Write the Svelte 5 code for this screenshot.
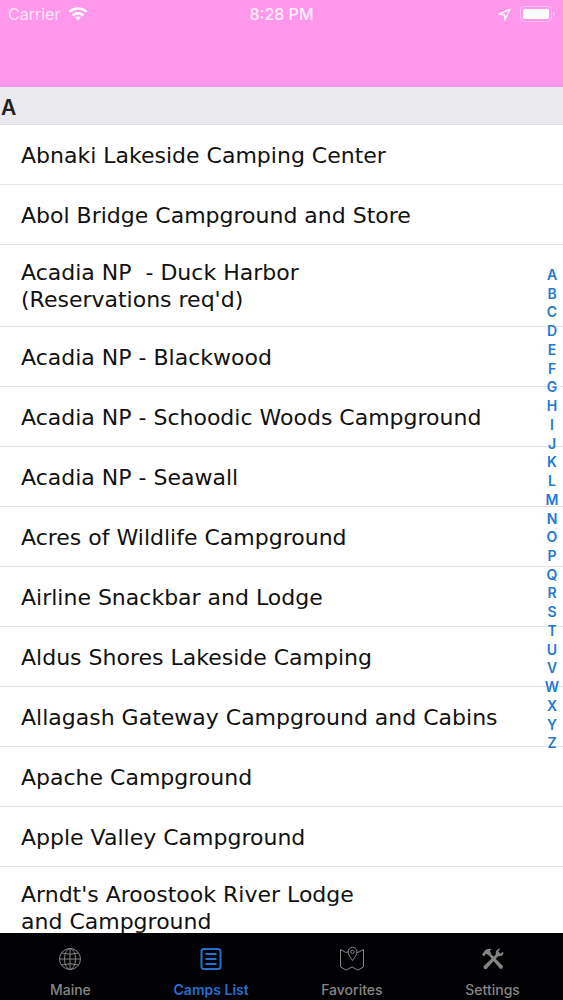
<script>
  const camps = [
    'Abnaki Lakeside Camping Center',
    'Abol Bridge Campground and Store',
    "Acadia NP  - Duck Harbor\n(Reservations req'd)",
    'Acadia NP - Blackwood',
    'Acadia NP - Schoodic Woods Campground',
    'Acadia NP - Seawall',
    'Acres of Wildlife Campground',
    'Airline Snackbar and Lodge',
    'Aldus Shores Lakeside Camping',
    'Allagash Gateway Campground and Cabins',
    'Apache Campground',
    'Apple Valley Campground',
    "Arndt's Aroostook River Lodge\nand Campground"
  ];
  const letters = 'ABCDEFGHIJKLMNOPQRSTUVWXYZ'.split('');
  const tabs = [
    { id: 'maine', label: 'Maine' },
    { id: 'camps', label: 'Camps List' },
    { id: 'favorites', label: 'Favorites' },
    { id: 'settings', label: 'Settings' }
  ];

  let active = $state('camps');
</script>

<div class="app">
  <header>
    <div class="status">
      <div class="carrier">
        <span>Carrier</span>
        <svg width="20" height="14" viewBox="0 0 20 14" fill="none" stroke="#fff" stroke-width="2.6" aria-hidden="true">
          <path d="M1.3 4.9 C6.3 0.3 13.7 0.3 18.7 4.9" />
          <path d="M4.7 8.5 C7.8 5.7 12.2 5.7 15.3 8.5" />
          <path d="M10 13.6 L7 10.6 C8.7 9.1 11.3 9.1 13 10.6 Z" fill="#fff" stroke="none" />
        </svg>
      </div>
      <time>8:28 PM</time>
      <div class="power">
        <svg width="13" height="13" viewBox="0 0 13 13" fill="none" stroke="#fff" stroke-width="1.3" stroke-linejoin="round" aria-hidden="true">
          <path d="M12 1 L1 6.4 L6.4 6.8 L6.8 12 Z" />
        </svg>
        <svg width="36" height="16" viewBox="0 0 36 16" aria-hidden="true">
          <rect x="1.5" y="0.5" width="31" height="15" rx="3.5" fill="none" stroke="#fff" stroke-opacity="0.4" />
          <rect x="4" y="3" width="26" height="10" rx="1.5" fill="#fff" />
          <path d="M34 5.5 C36 6.3 36 9.7 34 10.5 Z" fill="#fff" fill-opacity="0.5" />
        </svg>
      </div>
    </div>
  </header>

  <main>
    <h2>A</h2>
    <ul>
      {#each camps as camp}
        <li><a href="#camp">{camp}</a></li>
      {/each}
    </ul>
    <nav class="index" aria-label="Alphabet">
      {#each letters as letter}
        <a href="#{letter}">{letter}</a>
      {/each}
    </nav>
  </main>

  <nav class="tabs" aria-label="Sections">
    {#each tabs as tab (tab.id)}
      <button class:active={active === tab.id} onclick={() => (active = tab.id)}>
        <svg width="26" height="26" viewBox="0 0 26 26" fill="none" stroke="currentColor" aria-hidden="true">
          {#if tab.id === 'maine'}
            <circle cx="13" cy="13" r="10.5" />
            <ellipse cx="13" cy="13" rx="5.5" ry="10.5" />
            <path d="M13 2.5 V23.5 M2.5 13 H23.5 M4.5 7 Q13 9.5 21.5 7 M4.5 19 Q13 16.5 21.5 19" />
          {:else if tab.id === 'camps'}
            <rect x="3.5" y="3" width="19" height="20" rx="2.5" stroke-width="2" />
            <path d="M7.5 8 H18.5 M7.5 13 H18.5 M7.5 18 H18.5" stroke-width="1.8" />
          {:else if tab.id === 'favorites'}
            <path d="M10 5.5 L7 6.5 L1.5 3.5 V21 L7 24 L13 21 L19 24 L24.5 21 V3.5 L19 6.5 L17.5 6" />
            <path d="M13.5 14.5 C11.5 11.5 9 8.5 9 5.8 A4.5 4.5 0 0 1 18 5.8 C18 8.5 15.5 11.5 13.5 14.5 Z" />
            <circle cx="13.5" cy="5.8" r="1.7" />
          {:else}
            <g fill="currentColor" stroke="none">
              <path d="M2 8.5 L4.8 4.8 C6.5 2.6 9.3 2.2 12.3 3.2 C10.3 3.6 9.6 4.6 10.2 6 L11.4 7.6 L9 10 L7.3 8.2 L5.6 8 L4 10.4 Z" />
              <path d="M9.2 9.8 L11 8 L22.8 20 C23.4 21.6 21.6 23.4 20 22.8 Z" />
              <path d="M20.3 2.7 L18.2 5.4 L20.2 7.7 L23.2 5.8 C24 8.8 21.6 11 18.2 10 L6.5 23 C4.6 23.6 3 22 3.6 20.2 L16 8.2 C15 5.2 17.2 2.6 20.3 2.7 Z" />
            </g>
          {/if}
        </svg>
        <span>{tab.label}</span>
      </button>
    {/each}
  </nav>
</div>

<style>
  :global(body) { margin: 0; }

  .app {
    display: flex;
    flex-direction: column;
    height: 100vh;
    overflow: hidden;
    background: #fff;
    font-family: Inter, "Liberation Sans", sans-serif;
  }
  a { color: inherit; text-decoration: none; }

  header {
    flex: none;
    height: 87px;
    background: #ff98ec;
    color: #fff;
  }
  .status {
    display: grid;
    grid-template-columns: 1fr auto 1fr;
    align-items: center;
    height: 28px;
    padding: 0 8px;
    font-size: 16px;
  }
  .carrier, .power {
    display: flex;
    align-items: center;
    gap: 8px;
  }
  .carrier span { opacity: 0.75; }
  time { font-weight: 500; opacity: 0.85; }
  .power { justify-content: flex-end; }

  main {
    position: relative;
    flex: 1;
    min-height: 0;
    overflow: hidden;
  }
  h2 {
    box-sizing: border-box;
    height: 38px;
    margin: 0;
    padding: 0 1px;
    border-bottom: 1px solid #e0e0e2;
    background: #eae9ed;
    color: #222;
    font-size: 21px;
    font-weight: 600;
    line-height: 42px;
  }
  ul {
    margin: 0;
    padding: 0;
    list-style: none;
  }
  li { border-bottom: 1px solid #e3e3e5; }
  li a {
    display: flex;
    align-items: center;
    box-sizing: border-box;
    min-height: 59px;
    padding: 14px 20px 13px 21px;
    color: #111;
    font-family: Verdana, "DejaVu Sans", sans-serif;
    font-size: 22px;
    line-height: 27px;
    white-space: pre-wrap;
  }

  .index {
    position: absolute;
    top: 50%;
    right: 0;
    display: grid;
    grid-auto-rows: 1fr;
    width: 22px;
    height: 487px;
    transform: translateY(-50%);
    color: #1d7bd0;
    font-size: 14px;
    font-weight: 600;
    line-height: 16px;
    text-align: center;
  }

  .tabs {
    display: flex;
    flex: none;
    height: 67px;
    background: #020104;
  }
  button {
    display: flex;
    flex: 1;
    flex-direction: column;
    align-items: center;
    gap: 10px;
    padding: 13px 0 0;
    border: 0;
    background: none;
    color: #858585;
    font: 500 14px/16px Inter, "Liberation Sans", sans-serif;
  }
  button.active { color: #2470cf; font-weight: 600; }
</style>
